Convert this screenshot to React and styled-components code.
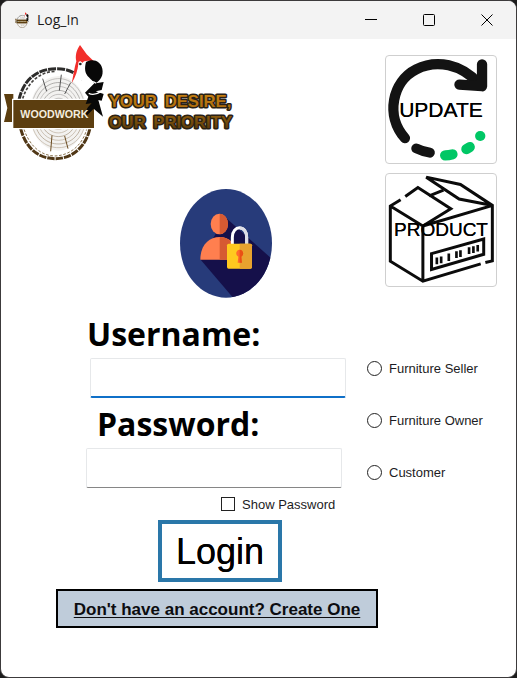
import React, { useState } from "react";
import styled, { createGlobalStyle } from "styled-components";

const GlobalStyle = createGlobalStyle`
  *, *::before, *::after { box-sizing: border-box; }
  body {
    margin: 0;
    background: #1c1c1c;
    color: #000;
    font-family: "Liberation Sans", Arial, sans-serif;
  }
  button, input { font: inherit; color: inherit; }
`;

const Window = styled.main`
  display: flex;
  flex-direction: column;
  min-height: 100vh;
  background: #fff;
  border: 1px solid #3c3a3b;
  border-radius: 9px;
  overflow: hidden;
`;

const TitleBar = styled.header`
  display: flex;
  align-items: center;
  height: 38px;
  padding-left: 13px;
  background: #f3f3f3;
`;

const Title = styled.h1`
  flex: 1;
  margin: 0 0 0 7px;
  font: 400 14px/20px "Open Sans", "Noto Sans", sans-serif;
  color: #1b1b1b;
`;

const WindowButton = styled.button`
  display: grid;
  place-items: center;
  width: 58px;
  height: 38px;
  padding: 0;
  border: 0;
  background: transparent;
`;

const TopSection = styled.section`
  display: flex;
  justify-content: space-between;
  padding: 3px 19px 10px 0;
`;

const Branding = styled.div`
  display: flex;
  flex-direction: column;
  align-items: flex-end;
  gap: 23px;
  width: 271px;
`;

const LogoSlot = styled.div`
  align-self: flex-start;
  height: 124px;
  svg { display: block; }
`;

const Tiles = styled.nav`
  display: flex;
  flex-direction: column;
  gap: 9px;
  padding-top: 13px;
`;

const Tile = styled.button`
  display: grid;
  place-items: center;
  width: 112px;
  height: ${(p) => p.$height}px;
  padding: 0;
  border: 1px solid #cfcfcf;
  border-radius: 4px;
  background: #fff;
  svg, span { grid-area: 1 / 1; }
`;

const TileLabel = styled.span`
  font-size: ${(p) => p.$size}px;
  line-height: 24px;
  text-shadow: 0 0 0 #000;
`;

const FormSection = styled.section`
  display: flex;
  justify-content: space-between;
`;

const Fields = styled.div`
  display: flex;
  flex-direction: column;
  align-items: flex-start;
  width: 345px;
  padding-left: 85px;
`;

const FieldLabel = styled.label`
  padding: 2px 0 0 ${(p) => p.$indent}px;
  font: 700 32px/48px "Open Sans", "Noto Sans", sans-serif;
`;

const TextInput = styled.input`
  align-self: ${(p) => (p.$active ? "flex-end" : "flex-start")};
  width: 256px;
  height: 40px;
  padding: 4px 8px;
  border: 1px solid #e6e8ea;
  border-bottom: ${(p) => (p.$active ? "2px solid #0f70c8" : "1px solid #868686")};
  border-radius: 2px;
  background: #fff;
  font-size: 20px;
  outline: none;
`;

const CheckRow = styled.label`
  display: flex;
  align-items: center;
  gap: 7px;
  height: 32px;
  padding-left: 135px;
  font-size: 13px;
  color: #1c1c24;
`;

const Mark = styled.input`
  appearance: none;
  flex: none;
  width: ${(p) => (p.type === "radio" ? 15 : 14)}px;
  height: ${(p) => (p.type === "radio" ? 15 : 14)}px;
  margin: 0;
  border: 1px solid #222;
  border-radius: ${(p) => (p.type === "radio" ? "50%" : "0")};
  background: #fff;
  &:checked { background: #222; box-shadow: inset 0 0 0 3px #fff; }
`;

const Roles = styled.fieldset`
  width: 149px;
  margin: 0;
  padding: 34px 0 0;
  border: 0;
`;

const RoleRow = styled.label`
  display: flex;
  align-items: center;
  gap: 7px;
  height: 52px;
  font-size: 13px;
  color: #1c1c24;
`;

const Actions = styled.section`
  display: flex;
  flex-direction: column;
  gap: 7px;
  padding: 0 138px 49px 55px;
`;

const LoginButton = styled.button`
  align-self: flex-start;
  width: 124px;
  height: 62px;
  margin-left: 102px;
  padding: 2px 0 0;
  border: 4px solid #2a77a9;
  background: #fff;
  font-size: 36px;
  text-shadow: 0 0 0 #000;
`;

const CreateLink = styled.a`
  display: block;
  padding-top: 2px;
  border: 2px solid #000;
  background: #bfccda;
  color: #0c0c10;
  font-size: 17px;
  font-weight: 700;
  line-height: 33px;
  text-align: center;
  text-decoration: underline;
  text-decoration-thickness: 1px;
  text-underline-offset: 2px;
`;

function Emblem() {
  const rings = [0.95, 0.84, 0.73, 0.62, 0.51, 0.4, 0.29, 0.18, 0.08];
  return (
    <g>
      <ellipse cx="166" cy="220" rx="104" ry="134" fill="#fff" />
      <g fill="none" strokeWidth="9">
        <path d="M57 180C70 118 112 86 170 86c34 0 58 12 76 34" stroke="#2d2c2b" strokeDasharray="24 3" />
        <path d="M64 190C78 132 114 96 165 94" stroke="#454341" strokeWidth="5" strokeDasharray="9 5" />
        <path d="M62 266C78 326 116 356 166 356c52 0 92-36 104-92" stroke="#513817" strokeDasharray="22 3" />
        <path d="M72 268c16 46 46 78 92 80 50-2 84-36 96-80" stroke="#8b7552" strokeWidth="3" strokeDasharray="8 5" />
      </g>
      <ellipse cx="175" cy="220" rx="86" ry="112" fill="#f3f2f0" />
      <g fill="none" strokeWidth="2">
        {rings.map((r, i) => (
          <path
            key={r}
            d={`M${175 - 86 * r} 220C${175 - 86 * r} ${220 - 138 * r} ${175 + 80 * r} ${214 - 148 * r} ${175 + 86 * r} 220`}
            stroke={i % 2 ? "#8e8c8a" : "#aaa8a6"}
          />
        ))}
        {rings.map((r, i) => (
          <path
            key={r}
            d={`M${175 - 86 * r} 232C${175 - 80 * r} ${226 + 138 * r} ${175 + 86 * r} ${226 + 130 * r} ${175 + 86 * r} 232`}
            stroke={i % 2 ? "#a3937c" : "#b9ac9a"}
          />
        ))}
      </g>
      <path d="M128 116l12 38M184 104l-6 48M212 128l-18 34" stroke="#555" strokeWidth="3" />
      <path d="M152 334l4-48M204 326l-10-38" stroke="#6a4b20" strokeWidth="3" />
      <path d="M12 162h28v84H12l10-42z" fill="#5c3e10" />
      <path d="M38 178h246v88H38z" fill="#5c3e10" stroke="#fff" strokeWidth="4" />
      <path d="M240 62l30 2-10 50-26 14-12-24 8-32z" fill="#fff" />
      <path d="M240 15l20 28 23 22c-18-5-32-4-36 4-4-7-12-7-12 2-1 18-8 38-20 59 6-26 8-48 14-66-4-16 0-34 11-49z" fill="#f22f2b" />
      <circle cx="241" cy="72" r="4" fill="#222" />
      <path d="M258 66c20-12 44-4 49 20 4 22-6 34-20 44l24-4-6 24-18 4 24 8-6 20-10-2 14 50-28-24-22 22c-4-20 8-30 16-38l-18 2 8-22-10-12 28-28c-12-20-36-22-25-64z" fill="#080808" />
      <path d="M268 128c6-4 14-4 20 2M266 160c12 6 26 2 38-6" stroke="#fff" strokeWidth="4" fill="none" />
      <text x="61" y="234" fill="#f4eddf" fontFamily="'Liberation Sans', sans-serif" fontWeight="700" fontSize="32">
        WOODWORK
      </text>
    </g>
  );
}

function BrandLogo() {
  return (
    <svg width="236" height="124" viewBox="3 6 708 372" role="img" aria-label="Woodwork">
      <defs>
        <linearGradient id="sloganTop" x1="0" y1="0" x2="0" y2="1">
          <stop offset="0" stopColor="#c98212" />
          <stop offset="1" stopColor="#a8690c" />
        </linearGradient>
        <linearGradient id="sloganBottom" x1="0" y1="0" x2="0" y2="1">
          <stop offset="0" stopColor="#94600f" />
          <stop offset="1" stopColor="#513407" />
        </linearGradient>
      </defs>
      <Emblem />
      <g
        fontFamily="'Liberation Sans', sans-serif"
        fontWeight="700"
        fontSize="50"
        stroke="#2a2114"
        strokeWidth="9"
        strokeLinejoin="round"
        paintOrder="stroke"
      >
        <text x="326" y="200" fill="url(#sloganTop)">YOUR</text>
        <text x="494" y="200" fill="url(#sloganTop)">DESIRE,</text>
        <text x="326" y="264" fill="url(#sloganBottom)">OUR</text>
        <text x="460" y="264" fill="url(#sloganBottom)">PRIORITY</text>
      </g>
    </svg>
  );
}

function Avatar() {
  return (
    <svg width="92" height="109" viewBox="30 27 276 327" role="img" aria-label="User account">
      <defs>
        <clipPath id="avatarClip"><ellipse cx="168" cy="190" rx="138" ry="163" /></clipPath>
      </defs>
      <g clipPath="url(#avatarClip)">
        <path d="M30 27h276v327H30z" fill="#273b7a" />
        <path d="M166 112l140 125v117H190L92 239z" fill="#15104a" />
        <ellipse cx="148" cy="132" rx="26" ry="31" fill="#ff7f4f" />
        <path d="M149 101c14 0 25 14 25 31s-11 31-25 31z" fill="#d65a32" />
        <path d="M91 239c0-44 26-68 58-68s54 24 54 68z" fill="#ff7f4f" />
        <path d="M149 171c30 0 54 24 54 68h-54z" fill="#d65a32" />
        <path d="M187 194v-22c0-38 43-38 43 0v22" fill="none" stroke="#fff" strokeWidth="9" />
        <path d="M209 144c14 0 21 12 21 28v22" fill="none" stroke="#dedee6" strokeWidth="9" />
        <rect x="171" y="191" width="75" height="75" rx="5" fill="#ffc91f" />
        <path d="M209 191h32q5 0 5 5v65q0 5-5 5h-32z" fill="#e8a22e" />
        <path d="M203 248l2-18c-12-8-5-21 4-21s16 13 5 21l2 18z" fill="#ff6a2b" />
        <path d="M209 209c9 0 16 13 5 21l2 18h-7z" fill="#ea5014" />
      </g>
    </svg>
  );
}

function UpdateIcon() {
  return (
    <svg width="110" height="107" viewBox="31 33 331 320" aria-hidden="true">
      <g fill="none" strokeLinecap="round" strokeLinejoin="round">
        <path d="M88 279C28 212 50 108 122 72c62-31 136-15 188 43" stroke="#131313" strokeWidth="31" />
        <path d="M252 118l68 5V57" stroke="#131313" strokeWidth="31" />
        <path d="M122 310c12 6 24 10 41 13" stroke="#131313" strokeWidth="30" />
        <path d="M209 331c8 0 15-1 22-3" stroke="#00c765" strokeWidth="31" />
        <path d="M273 312l10-6" stroke="#00c765" strokeWidth="31" />
        <path d="M314 273h1" stroke="#00c765" strokeWidth="30" />
      </g>
    </svg>
  );
}

function ProductIcon() {
  return (
    <svg width="110" height="112" viewBox="31 28 331 332" aria-hidden="true">
      <g fill="none" stroke="#0b0b0b" strokeWidth="9">
        <path d="M75 103l-31 19v166l98 60 174-52M142 348V182L44 122" />
        <path d="M89 93l38-27 99 64-84 52 210-62-101-19-99-66 103 22 96 63v167l-21 5" strokeLinejoin="miter" />
        <path d="M161 91l43-17" />
        <path d="M168 265l157-44v46l-157 46z" />
        <path d="M184 277v20M197 274v20M220 265v22M243 258v20M255 255v20M281 246v20M294 243v20M307 239v20" strokeWidth="8" />
      </g>
    </svg>
  );
}

const roles = ["Furniture Seller", "Furniture Owner", "Customer"];

export default function App() {
  const [showPassword, setShowPassword] = useState(false);
  return (
    <>
      <GlobalStyle />
      <Window>
        <TitleBar>
          <svg width="16" height="16" viewBox="5 10 315 355" aria-hidden="true"><Emblem /></svg>
          <Title>Log_In</Title>
          <WindowButton aria-label="Minimize">
            <svg width="12" height="12" viewBox="0 0 12 12"><path d="M0 5.5h12" stroke="#000" /></svg>
          </WindowButton>
          <WindowButton aria-label="Maximize">
            <svg width="12" height="12" viewBox="0 0 12 12"><rect x=".5" y=".5" width="11" height="11" rx="1" fill="none" stroke="#000" /></svg>
          </WindowButton>
          <WindowButton aria-label="Close">
            <svg width="12" height="12" viewBox="0 0 12 12"><path d="M.5.5l11 11M11.5.5l-11 11" stroke="#000" /></svg>
          </WindowButton>
        </TitleBar>

        <TopSection>
          <Branding>
            <LogoSlot><BrandLogo /></LogoSlot>
            <Avatar />
          </Branding>
          <Tiles>
            <Tile $height={109}><UpdateIcon /><TileLabel $size={21}>UPDATE</TileLabel></Tile>
            <Tile $height={114}><ProductIcon /><TileLabel $size={19}>PRODUCT</TileLabel></Tile>
          </Tiles>
        </TopSection>

        <FormSection>
          <Fields>
            <FieldLabel htmlFor="username" $indent={1}>Username:</FieldLabel>
            <TextInput id="username" type="text" $active />
            <FieldLabel htmlFor="password" $indent={11}>Password:</FieldLabel>
            <TextInput id="password" type={showPassword ? "text" : "password"} />
            <CheckRow>
              <Mark type="checkbox" checked={showPassword} onChange={(e) => setShowPassword(e.target.checked)} />
              Show Password
            </CheckRow>
          </Fields>
          <Roles aria-label="Account type">
            {roles.map((role) => (
              <RoleRow key={role}>
                <Mark type="radio" name="role" value={role} />
                {role}
              </RoleRow>
            ))}
          </Roles>
        </FormSection>

        <Actions>
          <LoginButton type="submit">Login</LoginButton>
          <CreateLink href="#create">Don't have an account? Create One</CreateLink>
        </Actions>
      </Window>
    </>
  );
}
